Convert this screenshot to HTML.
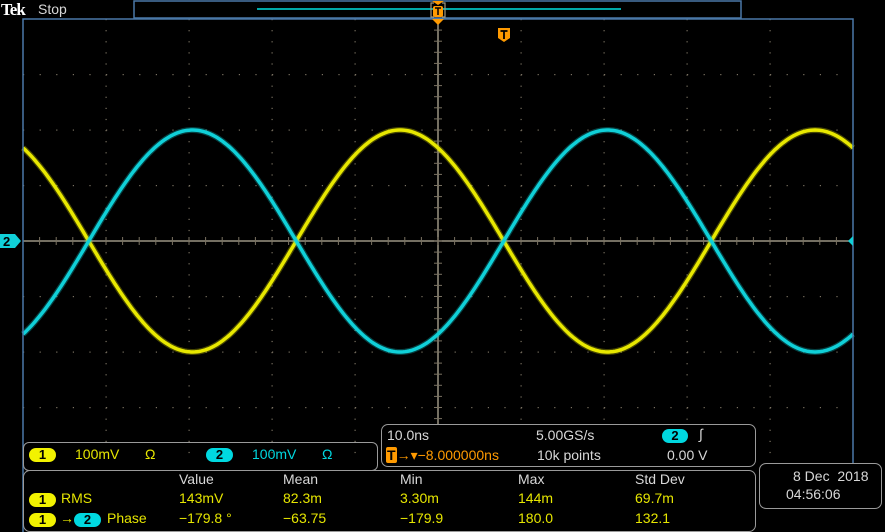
<!DOCTYPE html>
<html><head><meta charset="utf-8"><style>
body{margin:0;width:885px;height:532px;background:#000;overflow:hidden;position:relative;font-family:"Liberation Sans",sans-serif;font-size:14px}
.t{position:absolute;white-space:nowrap}
.box{position:absolute;border:1px solid #9a9a9a;border-radius:7px}
.y{color:#e6e600}.c{color:#00d8e0}.w{color:#d8d8d8}.o{color:#ff9a00}
.pill{position:absolute;height:14px;border-radius:7px;font-weight:bold;color:#000;text-align:center;line-height:14px;font-size:13px}
.py{background:#f2f200}.pc{background:#00d8e0}
</style></head><body>
<svg id="g" width="885" height="532" style="position:absolute;left:0;top:0"></svg>
<div class="t" style="left:1px;top:0;font-family:'Liberation Serif',serif;font-weight:bold;font-size:17px;color:#fff;letter-spacing:-1px">Tek</div>
<div class="t w" style="left:38px;top:1px;font-size:14px">Stop</div>

<div class="box" style="left:23px;top:442px;width:353px;height:27px;border-radius:6px"></div>
<div class="pill py" style="left:29px;top:448px;width:27px">1</div>
<div class="t y" style="left:75px;top:446px">100mV</div>
<div class="t y" style="left:145px;top:446px">Ω</div>
<div class="pill pc" style="left:206px;top:448px;width:27px">2</div>
<div class="t c" style="left:252px;top:446px">100mV</div>
<div class="t c" style="left:322px;top:446px">Ω</div>

<div class="box" style="left:381px;top:424px;width:373px;height:41px;background:#000"></div>
<div class="t w" style="left:387px;top:427px">10.0ns</div>
<div class="t w" style="left:536px;top:427px">5.00GS/s</div>
<div class="pill pc" style="left:662px;top:429px;width:26px">2</div>
<div class="t w" style="left:699px;top:426px">∫</div>
<div class="t o" style="left:386px;top:447px"><span style="background:#ff9a00;color:#000;font-weight:bold;padding:0 1px;border-radius:2px">T</span>→▾−8.000000ns</div>
<div class="t w" style="left:537px;top:447px">10k points</div>
<div class="t w" style="left:667px;top:447px">0.00 V</div>

<div class="box" style="left:23px;top:470px;width:731px;height:60px"></div>
<div class="t w" style="left:179px;top:471px">Value</div>
<div class="t w" style="left:283px;top:471px">Mean</div>
<div class="t w" style="left:400px;top:471px">Min</div>
<div class="t w" style="left:518px;top:471px">Max</div>
<div class="t w" style="left:635px;top:471px">Std Dev</div>
<div class="pill py" style="left:29px;top:493px;width:27px">1</div>
<div class="t y" style="left:61px;top:490px">RMS</div>
<div class="t y" style="left:179px;top:490px">143mV</div>
<div class="t y" style="left:283px;top:490px">82.3m</div>
<div class="t y" style="left:400px;top:490px">3.30m</div>
<div class="t y" style="left:518px;top:490px">144m</div>
<div class="t y" style="left:635px;top:490px">69.7m</div>
<div class="pill py" style="left:29px;top:513px;width:27px">1</div>
<div class="t y" style="left:60px;top:510px">→</div>
<div class="pill pc" style="left:74px;top:513px;width:27px">2</div>
<div class="t y" style="left:107px;top:510px">Phase</div>
<div class="t y" style="left:179px;top:510px">−179.8 °</div>
<div class="t y" style="left:283px;top:510px">−63.75</div>
<div class="t y" style="left:400px;top:510px">−179.9</div>
<div class="t y" style="left:518px;top:510px">180.0</div>
<div class="t y" style="left:635px;top:510px">132.1</div>

<div class="box" style="left:759px;top:463px;width:121px;height:44px"></div>
<div class="t w" style="left:793px;top:468px">8 Dec&nbsp; 2018</div>
<div class="t w" style="left:786px;top:486px">04:56:06</div>

<script>
var s='';
var L=23,R=853,T=19,B=463,cx=438,cy=241,dx=83,dy=55.5;
for(var i=1;i<10;i++){var x=L+i*dx;if(i==5)continue;for(var y=T;y<=B;y+=11.1)s+='<rect x="'+(x-0.5)+'" y="'+y+'" width="1.2" height="1.2" fill="#7a7262"/>';}
for(var j=1;j<8;j++){var y=T+j*dy;if(j==4)continue;for(var x=L;x<=R;x+=16.6)s+='<rect x="'+x+'" y="'+(y-0.5)+'" width="1.2" height="1.2" fill="#7a7262"/>';}
s+='<line x1="'+L+'" y1="'+cy+'" x2="'+R+'" y2="'+cy+'" stroke="#9a9482" stroke-width="1.5"/>';
s+='<line x1="'+cx+'" y1="'+T+'" x2="'+cx+'" y2="'+B+'" stroke="#9a9482" stroke-width="1.5"/>';
for(var x=L;x<=R;x+=16.6)s+='<line x1="'+x+'" y1="'+(cy-4)+'" x2="'+x+'" y2="'+(cy+4)+'" stroke="#7a7262"/>';
for(var y=T;y<=B;y+=11.1)s+='<line x1="'+(cx-4)+'" y1="'+y+'" x2="'+(cx+4)+'" y2="'+y+'" stroke="#7a7262"/>';
function w(sg,col){var p='';for(var x=L;x<=R;x+=2){var y=cy-sg*111*Math.cos(2*Math.PI*(x-400)/415);p+=x+','+y.toFixed(1)+' ';}
return '<polyline points="'+p+'" fill="none" stroke="'+col+'" stroke-opacity="0.3" stroke-width="6"/><polyline points="'+p+'" fill="none" stroke="'+col+'" stroke-width="3.5"/>';}
s+=w(1,'#e8e800')+w(-1,'#10d0d8');
s+='<path d="M'+L+' 532 V'+T+' H'+R+' V'+B+'" fill="none" stroke="#4a78a8" stroke-width="1.5"/>';
s+='<rect x="134" y="1" width="607" height="17" fill="#000" stroke="#4a78a8" stroke-width="1.5"/>';
s+='<line x1="257" y1="9" x2="621" y2="9" stroke="#00a8a8" stroke-width="2"/>';
s+='<path d="M434 3 H431 V17 H434 M442 3 H445 V17 H442" fill="none" stroke="#a09880" stroke-width="1.2"/>';
s+='<path d="M432 1 H444 L438 5Z" fill="#ff9a00"/><rect x="433" y="6" width="10" height="11" rx="2" fill="#ff9a00"/><path d="M435 8 H441 M438 8 V15" stroke="#000" stroke-width="1.5"/>';
s+='<path d="M432 19 H444 L438 25Z" fill="#ff9a00"/>';
s+='<path d="M498 28 H510 V38 L504 42 L498 38Z" fill="#ff9a00"/><path d="M500.5 31 H507.5 M504 31 V39" stroke="#000" stroke-width="1.8"/>';
s+='<path d="M0 234 H15 L21 241 L15 248 H0Z" fill="#10d0d8"/><text x="3" y="246" font-family="Liberation Sans" font-weight="bold" font-size="13" fill="#000">2</text>';
s+='<path d="M848 241 L853 236 V246Z" fill="#10d0d8"/>';
document.getElementById('g').innerHTML=s;
</script>
</body></html>
